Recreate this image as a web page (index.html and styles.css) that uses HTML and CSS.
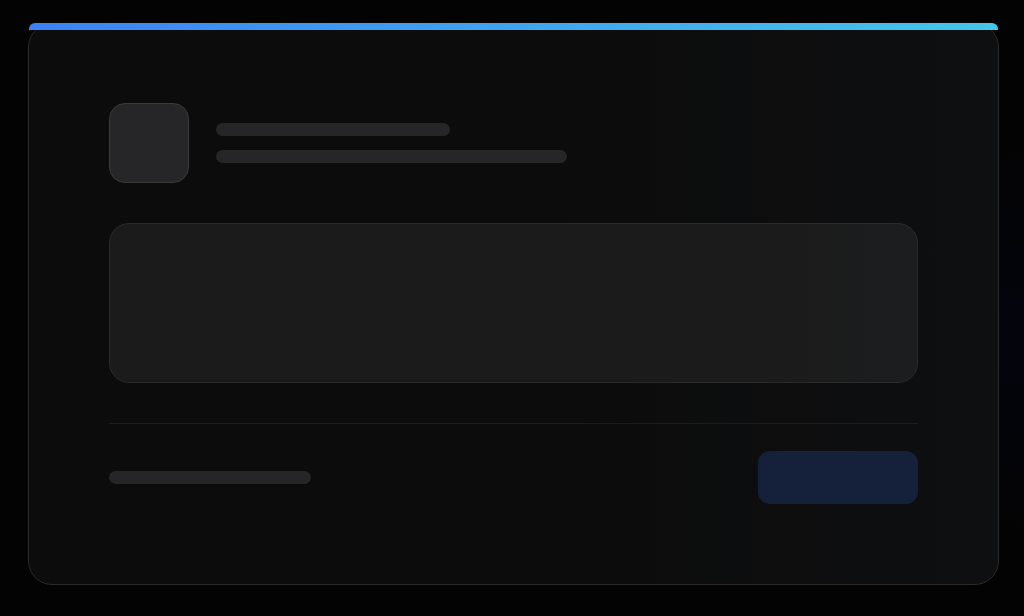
FILE: index.html
```html
<!DOCTYPE html>
<html lang="en">
<head>
    <meta charset="UTF-8">
    <meta name="viewport" content="width=device-width, initial-scale=1.0">
    <title>Loading</title>
    <link rel="stylesheet" href="styles.css">
</head>
<body>

    <!-- Skeleton card shown while the profile loads -->
    <div class="card">
        <div class="accent-bar"></div>

        <div class="profile">
            <div class="avatar"></div>
            <div class="lines">
                <div class="bone bone-title"></div>
                <div class="bone bone-sub"></div>
            </div>
        </div>

        <div class="panel"></div>

        <hr class="divider">

        <div class="footer">
            <div class="bone bone-meta"></div>
            <div class="btn-placeholder"></div>
        </div>
    </div>

</body>
</html>
```

FILE: styles.css
```css
/* Reset default styles */
* {
    margin: 0;
    padding: 0;
    box-sizing: border-box;
}

body {
    font-family: "Liberation Sans", Arial, sans-serif;
    background: radial-gradient(ellipse at 100% 55%, #03050d 0%, #030303 45%);
    background-color: #030303;
    min-height: 100vh;
    padding: 23px 25px 0 28px;
}

/* Card */
.card {
    position: relative;
    width: 971px;
    padding: 79px 80px 80px;
    background: linear-gradient(90deg, #0c0c0c 0%, #0c0c0c 55%, #0e0f11 100%);
    border: 1px solid #2a2a2a;
    border-radius: 24px;
}

.accent-bar {
    position: absolute;
    top: -1px;
    left: 0;
    right: 0;
    height: 7px;
    border-radius: 6px 6px 0 0;
    background: linear-gradient(90deg, #3b82f6, #44c6ea);
}

/* Header row */
.profile {
    display: flex;
    align-items: center;
    gap: 27px;
}

.avatar {
    width: 80px;
    height: 80px;
    background-color: #262628;
    border: 1px solid #3a3a3b;
    border-radius: 16px;
}

.lines {
    display: flex;
    flex-direction: column;
    gap: 14px;
}

.bone {
    height: 13px;
    background-color: #262628;
    border-radius: 7px;
}

.bone-title {
    width: 234px;
}

.bone-sub {
    width: 351px;
}

/* Body block */
.panel {
    margin-top: 40px;
    height: 160px;
    background: linear-gradient(90deg, #1b1b1b 0%, #1b1b1b 80%, #1c1d1e 100%);
    border: 1px solid #2a2a2a;
    border-radius: 20px;
}

.divider {
    margin-top: 40px;
    border: none;
    border-top: 1px solid #1c1c1d;
}

/* Footer row */
.footer {
    display: flex;
    justify-content: space-between;
    align-items: center;
    margin-top: 27px;
}

.bone-meta {
    width: 202px;
}

.btn-placeholder {
    width: 160px;
    height: 53px;
    background-color: #15213a;
    border-radius: 12px;
}
```
